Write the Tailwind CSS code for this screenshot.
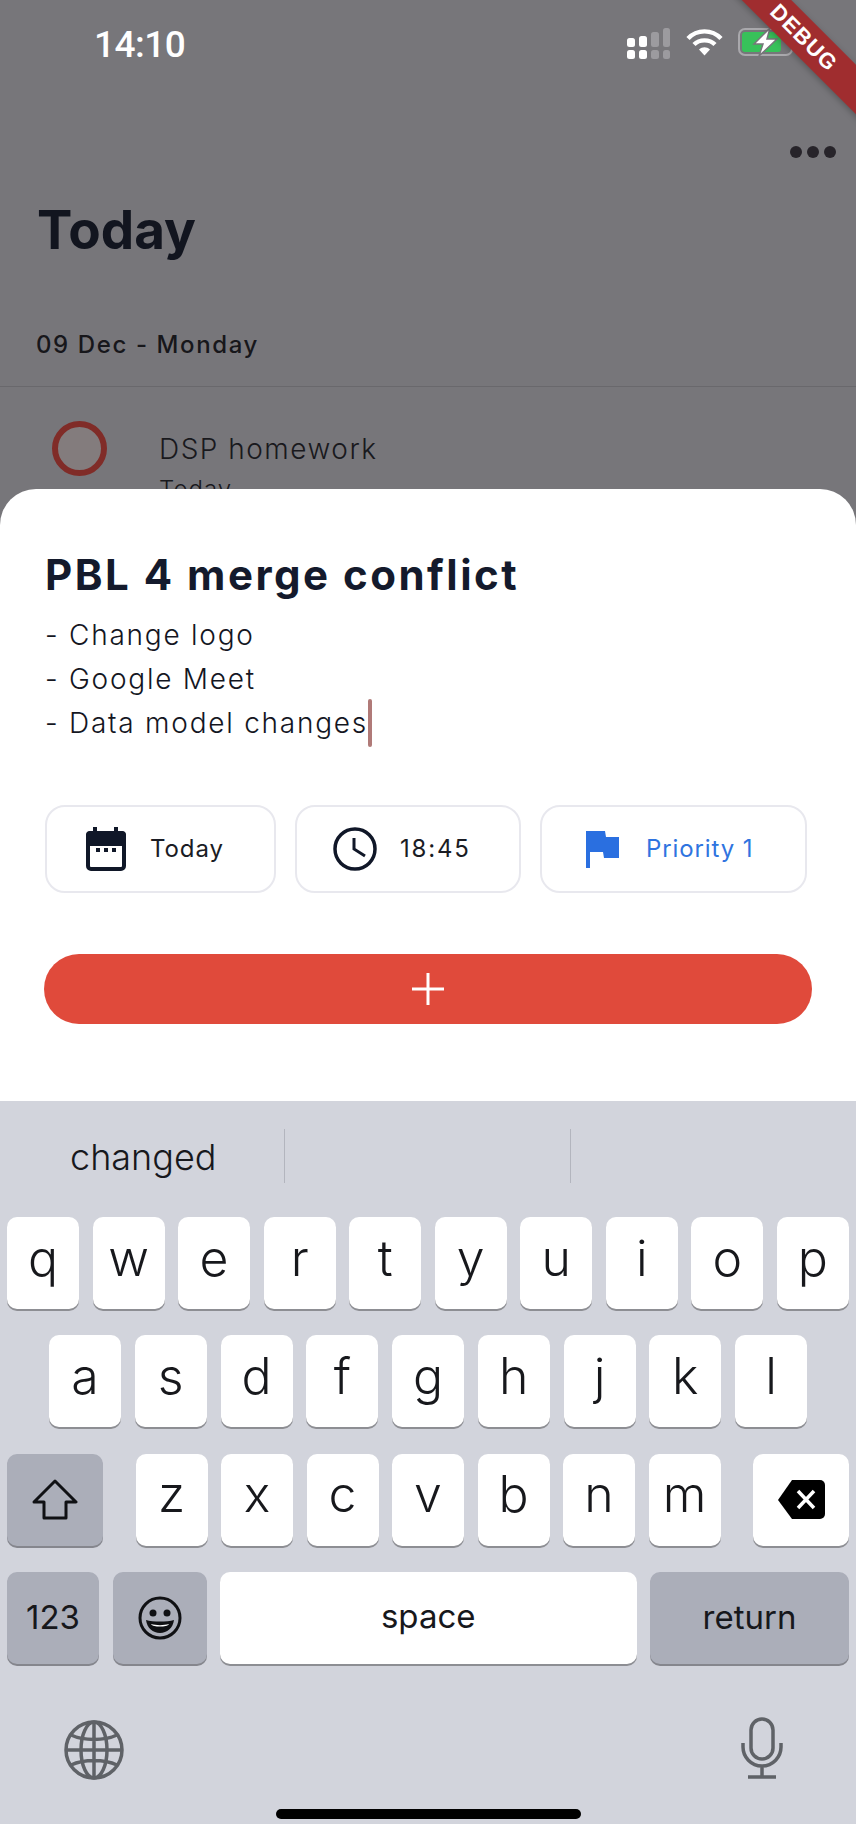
<!DOCTYPE html>
<html lang="en">
<head>
  <meta charset="UTF-8">
  <script src="https://cdn.jsdelivr.net/npm/@tailwindcss/browser@4"></script>
  <title>Today</title>
</head>
<body class="font-['Inter',sans-serif]">
<div class="relative w-[856px] h-[1824px] overflow-hidden flex flex-col bg-[#77767a]">

  <!-- debug banner -->
  <div class="absolute top-[20px] right-[-68px] w-[240px] h-[35px] rotate-45 origin-center bg-[#a02d2f] shadow-[0_2px_6px_rgba(0,0,0,0.25)] flex items-center justify-center text-white font-bold text-[22px] tracking-[1px] font-['Liberation_Sans',sans-serif] z-20">DEBUG</div>

  <!-- page behind the sheet -->
  <div class="h-[489px] shrink-0 overflow-hidden">
    <div class="h-[102px] flex items-start justify-between pt-[26px] pl-[94px] pr-[63px]">
      <span class="text-white text-[37px] leading-[38px] font-medium tracking-[-0.5px] font-['Roboto',sans-serif]">14:10</span>
      <div class="flex items-start gap-[16px] pt-[2px]">
        <svg width="43" height="31" viewBox="0 0 43 31">
          <rect x="0" y="10" width="8" height="9" rx="2.5" fill="#fff"/><rect x="0" y="22" width="8" height="9" rx="2.5" fill="#fff"/>
          <rect x="12" y="8" width="8" height="11" rx="2.5" fill="#fff"/><rect x="12" y="22" width="8" height="9" rx="2.5" fill="#fff"/>
          <rect x="24" y="4" width="8" height="15" rx="2.5" fill="#9c9b9f"/><rect x="24" y="22" width="8" height="9" rx="2.5" fill="#9c9b9f"/>
          <rect x="36" y="0" width="7" height="19" rx="2.5" fill="#9c9b9f"/><rect x="36" y="22" width="7" height="9" rx="2.5" fill="#9c9b9f"/>
        </svg>
        <svg width="37" height="28" viewBox="0 0 37 28" fill="none" stroke="#fff" stroke-width="4.4">
          <path d="M2 10.5C11 1 26 1 35 10.5"/><path d="M8 16.5C13.500 11 23.500 11 29 16.5"/>
          <path d="M13 21.500L18.500 27.500L24 21.500C20.500 18.500 16.500 18.500 13 21.500Z" fill="#fff" stroke="none"/>
        </svg>
        <svg width="55" height="28" viewBox="0 0 55 28" class="-ml-[1px]">
          <rect x="1" y="1" width="53" height="26" rx="6" fill="none" stroke="#a9a8ac" stroke-width="2"/>
          <rect x="4" y="4" width="39" height="20" rx="3" fill="#38c15a"/>
          <path d="M32 0L16 16H25L21 28L39 11H29Z" fill="#fff" stroke="#77767a" stroke-width="1.500"/>
        </svg>
      </div>
    </div>
    <div class="flex justify-end gap-[5px] pr-[20px] pt-[44px]">
      <span class="w-[12px] h-[12px] rounded-full bg-[#27242a]"></span>
      <span class="w-[12px] h-[12px] rounded-full bg-[#27242a]"></span>
      <span class="w-[12px] h-[12px] rounded-full bg-[#27242a]"></span>
    </div>
    <h1 class="pl-[37px] mt-[42px] text-[53px] leading-[60px] font-bold text-[#12151f]">Today</h1>
    <p class="pl-[36px] mt-[70px] text-[24px] leading-[30px] font-medium tracking-[1.6px] text-[#17171b]">09 Dec - Monday</p>
    <div class="mt-[26px] h-[1px] bg-[#69686c]"></div>
    <div class="flex pl-[52px] pt-[34px]">
      <span class="w-[55px] h-[55px] rounded-full border-[6px] border-[#802c28] bg-[#837c7d]"></span>
      <div class="ml-[52px] pt-[13px]">
        <p class="text-[28px] leading-[30px] font-light tracking-[1.5px] text-[#19191d]">DSP homework</p>
        <p class="mt-[12px] text-[24px] leading-[28px] font-light tracking-[1px] text-[#19191d]">Today</p>
      </div>
    </div>
  </div>

  <!-- bottom sheet -->
  <div class="h-[612px] shrink-0 bg-white rounded-t-[36px] px-[45px] pt-[63px] relative z-10">
    <h2 class="text-[42px] leading-[46px] font-bold tracking-[2.5px] text-[#141a2c]">PBL 4 merge conflict</h2>
    <div class="mt-[15px] text-[28px] leading-[44px] font-light tracking-[1.75px] text-[#14161f]">
      <p>- Change logo</p>
      <p>- Google Meet</p>
      <p class="flex items-center h-[44px]">- Data model changes<span class="w-[4px] h-[48px] shrink-0 rounded-full bg-[#b07a78]"></span></p>
    </div>

    <div class="mt-[60px] flex gap-[19px] text-[24px] tracking-[0.9px] pr-[4px]">
      <div class="w-[231px] h-[88px] rounded-[20px] border-2 border-[#e8e8ee] flex items-center pl-[39px] gap-[24px] text-[#1a1c24]">
        <svg width="40" height="44" viewBox="0 0 40 44">
          <rect x="7" y="0" width="4" height="8" fill="#101728"/><rect x="28" y="0" width="4" height="8" fill="#101728"/>
          <rect x="2" y="6" width="36" height="36" rx="3" fill="#fff" stroke="#101728" stroke-width="4"/>
          <path d="M0 8a4 4 0 0 1 4-4h32a4 4 0 0 1 4 4v11H0Z" fill="#101728"/>
          <rect x="10" y="21" width="4" height="4" fill="#101728"/><rect x="18" y="21" width="4" height="4" fill="#101728"/><rect x="26" y="21" width="4" height="4" fill="#101728"/>
        </svg>
        <span>Today</span>
      </div>
      <div class="w-[226px] h-[88px] rounded-[20px] border-2 border-[#e8e8ee] flex items-center pl-[36px] gap-[23px] text-[#1a1c24]">
        <svg width="44" height="44" viewBox="0 0 44 44" fill="none" stroke="#101728">
          <circle cx="22" cy="22" r="20" stroke-width="3.500"/><path d="M21 11V22L32 29" stroke-width="3"/>
        </svg>
        <span class="tracking-[1.8px]">18:45</span>
      </div>
      <div class="w-[267px] h-[88px] rounded-[20px] border-2 border-[#e8e8ee] flex items-center pl-[44px] gap-[27px] text-[#2f74e0]">
        <svg width="33" height="37" viewBox="0 0 33 37">
          <path d="M0 0H19L20 6H33V27H18L17 21H4V37H0Z" fill="#2a6fe0"/>
        </svg>
        <span>Priority 1</span>
      </div>
    </div>

    <button class="mt-[61px] -ml-[1px] w-[768px] h-[70px] rounded-full bg-[#e04a3b] flex items-center justify-center">
      <svg width="32" height="32" viewBox="0 0 32 32" stroke="#fff" stroke-width="3"><path d="M16 0V32M0 16H32"/></svg>
    </button>
  </div>

  <!-- keyboard -->
  <div class="flex-1 bg-[#d2d4dc] relative z-10">
    <div class="h-[116px] flex items-start pt-[28px]">
      <div class="w-[285px] h-[54px] border-r border-[#b3b5be] pl-[70px] text-[36px] leading-[56px] text-[#17181c] font-light">changed</div>
      <div class="w-[286px] h-[54px] border-r border-[#b3b5be]"></div>
    </div>

    <div class="flex flex-col gap-[26.3px] px-[7px] text-[#17181c]">
      <div class="flex justify-between text-[50px] font-light h-[92px]">
        <span class="w-[72px] pb-[10px] rounded-[10px] bg-white shadow-[0_2px_0_#8d8e93] flex items-center justify-center">q</span>
        <span class="w-[72px] pb-[10px] rounded-[10px] bg-white shadow-[0_2px_0_#8d8e93] flex items-center justify-center">w</span>
        <span class="w-[72px] pb-[10px] rounded-[10px] bg-white shadow-[0_2px_0_#8d8e93] flex items-center justify-center">e</span>
        <span class="w-[72px] pb-[10px] rounded-[10px] bg-white shadow-[0_2px_0_#8d8e93] flex items-center justify-center">r</span>
        <span class="w-[72px] pb-[10px] rounded-[10px] bg-white shadow-[0_2px_0_#8d8e93] flex items-center justify-center">t</span>
        <span class="w-[72px] pb-[10px] rounded-[10px] bg-white shadow-[0_2px_0_#8d8e93] flex items-center justify-center">y</span>
        <span class="w-[72px] pb-[10px] rounded-[10px] bg-white shadow-[0_2px_0_#8d8e93] flex items-center justify-center">u</span>
        <span class="w-[72px] pb-[10px] rounded-[10px] bg-white shadow-[0_2px_0_#8d8e93] flex items-center justify-center">i</span>
        <span class="w-[72px] pb-[10px] rounded-[10px] bg-white shadow-[0_2px_0_#8d8e93] flex items-center justify-center">o</span>
        <span class="w-[72px] pb-[10px] rounded-[10px] bg-white shadow-[0_2px_0_#8d8e93] flex items-center justify-center">p</span>
      </div>
      <div class="flex justify-between px-[42px] text-[50px] font-light h-[92px]">
        <span class="w-[72px] pb-[10px] rounded-[10px] bg-white shadow-[0_2px_0_#8d8e93] flex items-center justify-center">a</span>
        <span class="w-[72px] pb-[10px] rounded-[10px] bg-white shadow-[0_2px_0_#8d8e93] flex items-center justify-center">s</span>
        <span class="w-[72px] pb-[10px] rounded-[10px] bg-white shadow-[0_2px_0_#8d8e93] flex items-center justify-center">d</span>
        <span class="w-[72px] pb-[10px] rounded-[10px] bg-white shadow-[0_2px_0_#8d8e93] flex items-center justify-center">f</span>
        <span class="w-[72px] pb-[10px] rounded-[10px] bg-white shadow-[0_2px_0_#8d8e93] flex items-center justify-center">g</span>
        <span class="w-[72px] pb-[10px] rounded-[10px] bg-white shadow-[0_2px_0_#8d8e93] flex items-center justify-center">h</span>
        <span class="w-[72px] pb-[10px] rounded-[10px] bg-white shadow-[0_2px_0_#8d8e93] flex items-center justify-center">j</span>
        <span class="w-[72px] pb-[10px] rounded-[10px] bg-white shadow-[0_2px_0_#8d8e93] flex items-center justify-center">k</span>
        <span class="w-[72px] pb-[10px] rounded-[10px] bg-white shadow-[0_2px_0_#8d8e93] flex items-center justify-center">l</span>
      </div>
      <div class="flex justify-between text-[50px] font-light h-[92px]">
        <span class="w-[96px] rounded-[10px] bg-[#abaeb9] shadow-[0_2px_0_#85868d] flex items-center justify-center">
          <svg width="48" height="42" viewBox="0 0 48 42" fill="none" stroke="#101114" stroke-width="3" stroke-linejoin="round"><path d="M24 2L45 23H35V39H13V23H3Z"/></svg>
        </span>
        <div class="flex gap-[13.500px]">
          <span class="w-[72px] pb-[10px] rounded-[10px] bg-white shadow-[0_2px_0_#8d8e93] flex items-center justify-center">z</span>
          <span class="w-[72px] pb-[10px] rounded-[10px] bg-white shadow-[0_2px_0_#8d8e93] flex items-center justify-center">x</span>
          <span class="w-[72px] pb-[10px] rounded-[10px] bg-white shadow-[0_2px_0_#8d8e93] flex items-center justify-center">c</span>
          <span class="w-[72px] pb-[10px] rounded-[10px] bg-white shadow-[0_2px_0_#8d8e93] flex items-center justify-center">v</span>
          <span class="w-[72px] pb-[10px] rounded-[10px] bg-white shadow-[0_2px_0_#8d8e93] flex items-center justify-center">b</span>
          <span class="w-[72px] pb-[10px] rounded-[10px] bg-white shadow-[0_2px_0_#8d8e93] flex items-center justify-center">n</span>
          <span class="w-[72px] pb-[10px] rounded-[10px] bg-white shadow-[0_2px_0_#8d8e93] flex items-center justify-center">m</span>
        </div>
        <span class="w-[96px] rounded-[10px] bg-white shadow-[0_2px_0_#8d8e93] flex items-center justify-center">
          <svg width="47" height="39" viewBox="0 0 47 39"><path d="M14 0H42a5 5 0 0 1 5 5V34a5 5 0 0 1-5 5H14L0 20Z" fill="#000"/><path d="M20 11L36 28M36 11L20 28" stroke="#fff" stroke-width="3.500"/></svg>
        </span>
      </div>
      <div class="flex gap-[13.500px] text-[33px] font-normal h-[92px]">
        <span class="w-[92px] rounded-[10px] bg-[#abaeb9] shadow-[0_2px_0_#85868d] flex items-center justify-center">123</span>
        <span class="w-[94px] rounded-[10px] bg-[#abaeb9] shadow-[0_2px_0_#85868d] flex items-center justify-center">
          <svg width="44" height="44" viewBox="0 0 44 44"><circle cx="22" cy="22" r="20" fill="none" stroke="#101114" stroke-width="3"/><circle cx="15" cy="17" r="3.500" fill="#101114"/><circle cx="29" cy="17" r="3.500" fill="#101114"/><path d="M8 24C15 26 29 26 36 24C35 32 29 37 22 37C15 37 9 32 8 24Z" fill="#101114"/><path d="M13 28C18 29.500 26 29.500 31 28C30 30 26 30.500 22 30.500C18 30.500 14 30 13 28Z" fill="#fff"/></svg>
        </span>
        <span class="flex-1 pb-[2px] rounded-[10px] bg-white shadow-[0_2px_0_#8d8e93] flex items-center justify-center">space</span>
        <span class="w-[199px] rounded-[10px] bg-[#abaeb9] shadow-[0_2px_0_#85868d] flex items-center justify-center">return</span>
      </div>
    </div>

    <div class="flex justify-between items-start pl-[64px] pr-[73px] pt-[56px]">
      <svg width="60" height="60" viewBox="0 0 60 60" fill="none" stroke="#5f6267" stroke-width="3.500">
        <circle cx="30" cy="30" r="28"/><ellipse cx="30" cy="30" rx="13" ry="28"/><path d="M30 2V58M2 30H58M7 15C20 21 40 21 53 15M7 45C20 39 40 39 53 45"/>
      </svg>
      <svg width="42" height="62" viewBox="0 0 42 62" fill="none" stroke="#5f6267" stroke-width="3.500" class="-mt-[3px]">
        <rect x="10" y="2" width="22" height="40" rx="11"/><path d="M2 26V30C2 40 10 49 21 49C32 49 40 40 40 30V26M21 49V60M7 60H35"/>
      </svg>
    </div>
    <div class="absolute left-[276px] top-[708px] w-[305px] h-[10px] rounded-full bg-black"></div>
  </div>
</div>
</body>
</html>
